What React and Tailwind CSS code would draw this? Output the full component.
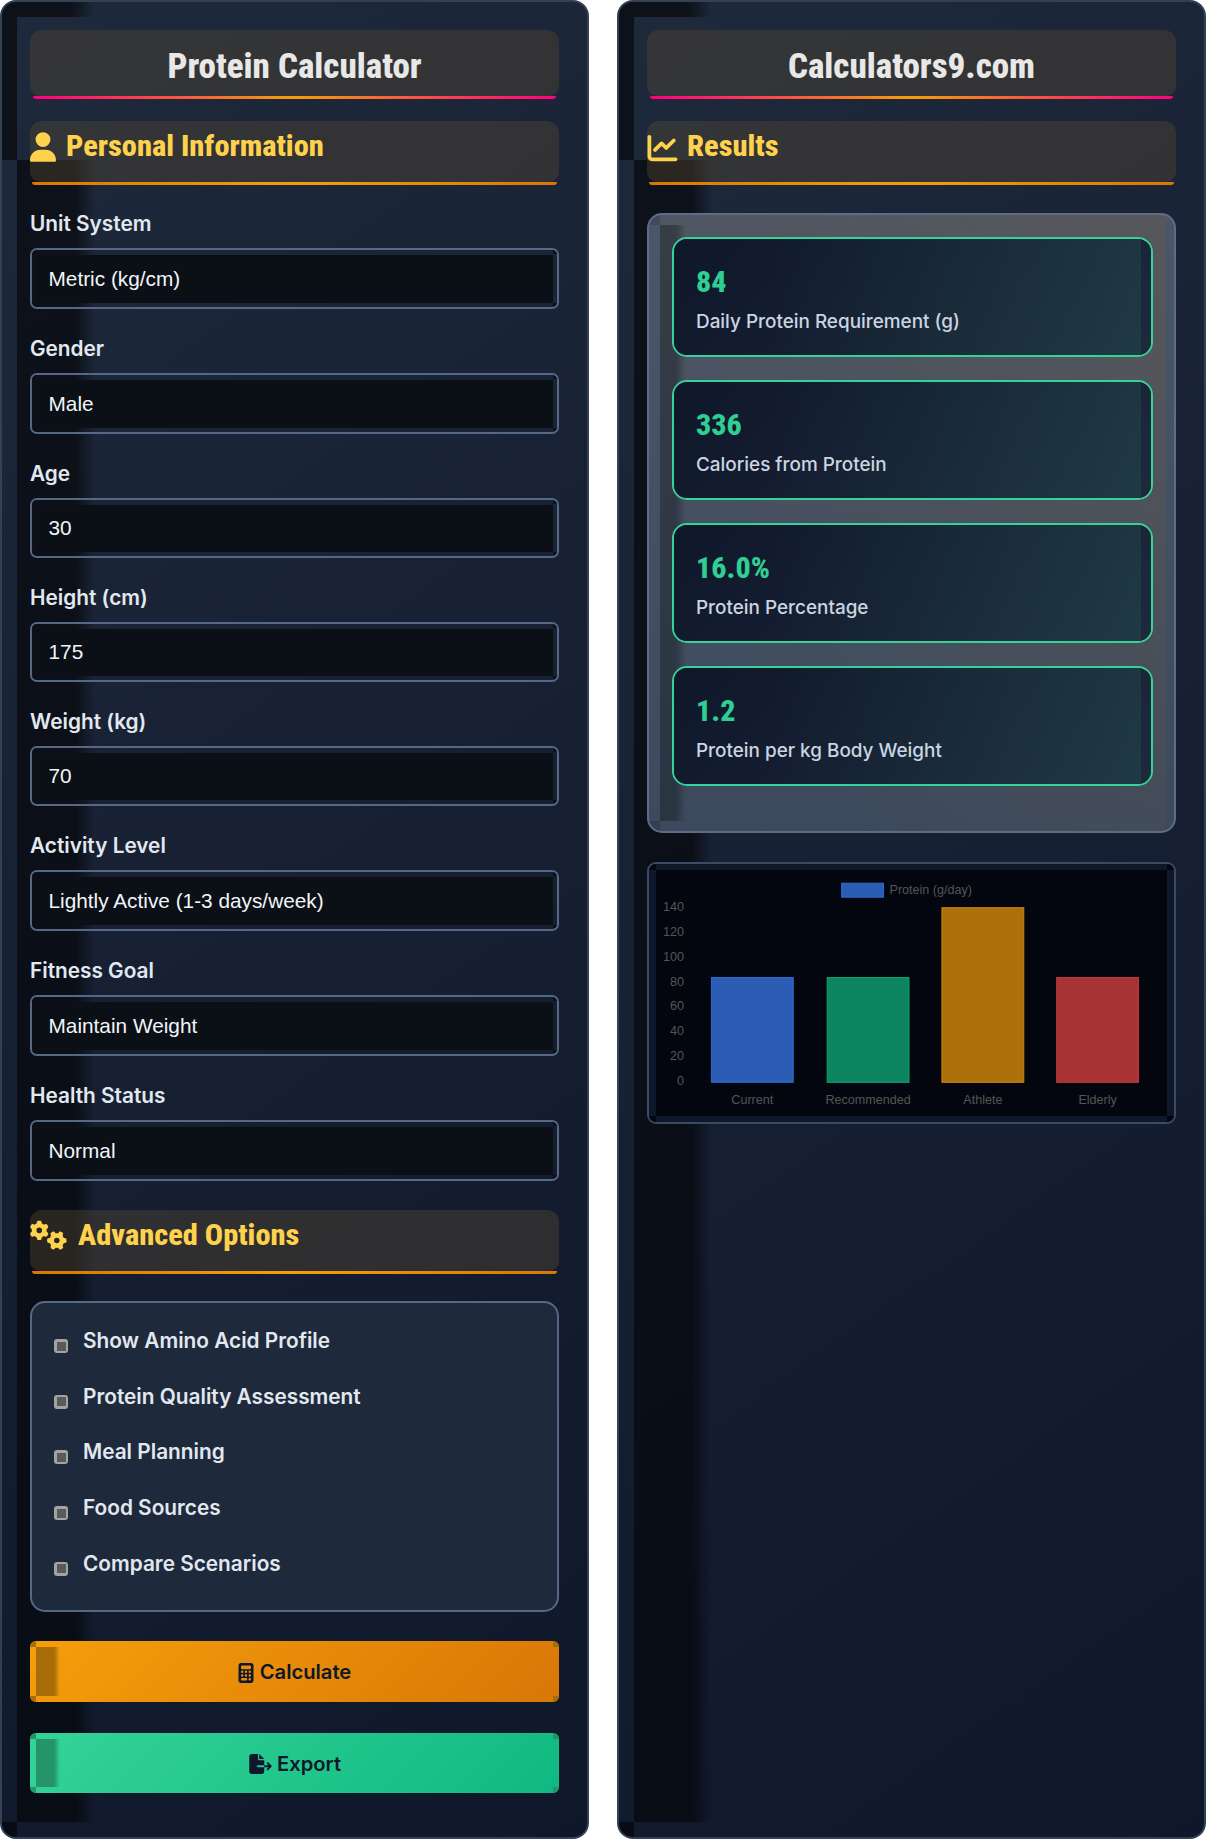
import { FaUser, FaChartLine, FaGears, FaCalculator, FaFileExport } from 'react-icons/fa6';

const condensed = "font-['Roboto_Condensed','Liberation_Sans_Narrow',Roboto,sans-serif]";

// dark leftovers in the corners of a box
function Corners({ size, color }) {
  const box = `absolute ${size} ${color}`;
  return (
    <>
      <span className={`${box} left-0 top-0`} />
      <span className={`${box} right-0 top-0`} />
      <span className={`${box} left-0 bottom-0`} />
      <span className={`${box} right-0 bottom-0`} />
    </>
  );
}

function Panel({ children }) {
  return (
    <section className="relative h-[1839px] w-[589px] overflow-hidden rounded-[16px] border-2 border-[#334155] bg-[linear-gradient(145deg,#1e293b,#0f172a)] px-[28px] pt-[28px]">
      <div className="pointer-events-none absolute left-[-2px] top-[-2px] h-[160px] w-[17px] bg-black/55" />
      <div className="pointer-events-none absolute left-[15px] top-[-2px] h-[17px] w-[78px] bg-linear-to-r from-black/55 from-70% to-transparent" />
      <div className="pointer-events-none absolute left-[15px] top-[158px] bottom-[15px] w-[78px] bg-linear-to-r from-black/55 from-75% to-transparent" />
      <div className="pointer-events-none absolute bottom-[-2px] left-[-2px] h-[17px] w-[17px] bg-black/55" />
      <div className="relative flex flex-col">{children}</div>
    </section>
  );
}

function Title({ children }) {
  return (
    <div className="relative mb-[25px]">
      <div className="flex h-[66px] items-center justify-center rounded-t-[12px] rounded-b-[10px] bg-[rgba(87,72,50,0.4)] pt-[7px]">
        <h1 className={`${condensed} text-[35px] font-extrabold leading-none text-[#e8e8e6]`}>{children}</h1>
      </div>
      <div className="absolute left-[3px] right-[3px] top-full h-[3px] rounded-b-[3px] bg-[linear-gradient(90deg,#ff0080,#f59e0b,#ff0080)]" />
    </div>
  );
}

function Section({ icon, gap, children, className }) {
  return (
    <div className={`relative ${className}`}>
      <div className="flex h-[61px] items-start rounded-t-[12px] rounded-b-[10px] bg-[rgba(87,72,50,0.4)] pt-[9px] text-[#ffd24d]">
        {icon}
        <h2 className={`${condensed} ${gap} whitespace-nowrap text-[30.4px] font-extrabold leading-[32px]`}>{children}</h2>
      </div>
      <div className="absolute left-[2px] right-[2px] top-full h-[3px] rounded-b-[3px] bg-[linear-gradient(90deg,#d97706,#f59e0b,#d97706)]" />
    </div>
  );
}

function Field({ label, tall, children }) {
  return (
    <div className="mb-[24px]">
      <label className="mb-[10px] block h-[30px] pt-px font-['Inter',sans-serif] text-[20.8px] font-semibold leading-[30px] text-[#e2e8f0]">{label}</label>
      <div className={`relative overflow-hidden rounded-[7px] border-2 border-[#566884] p-[4.5px] ${tall ? 'h-[61px]' : 'h-[60px]'}`}>
        <Corners size="h-[4px] w-[4px]" color="bg-[#0b0f16]" />
        <div className="h-full bg-[#0b0f16]">{children}</div>
      </div>
    </div>
  );
}

const controlClass = "h-full w-full appearance-none bg-transparent pl-[12px] font-['Liberation_Sans',sans-serif] text-[20.8px] text-[#f1f5f9] outline-none";

function SelectField({ label, value }) {
  return (
    <Field label={label} tall>
      <select defaultValue={value} className={controlClass}>
        <option value={value}>{value}</option>
      </select>
    </Field>
  );
}

function NumberField({ label, value }) {
  return (
    <Field label={label}>
      <input type="number" readOnly value={value} className={controlClass} />
    </Field>
  );
}

function Option({ children }) {
  return (
    <div className="flex h-[55.7px] items-start gap-[15px]">
      <span className="mt-[14px] flex h-[14px] w-[14px] items-center justify-center rounded-[3px] bg-[#a3a3a3]">
        <span className="h-[9px] w-[9px] bg-[#5a5a5a]" />
      </span>
      <span className="font-['Inter',sans-serif] text-[20.8px] font-semibold leading-[32px] text-[#e2e8f0]">{children}</span>
    </div>
  );
}

function ActionButton({ icon, colors, strip, corner, gap, className, children }) {
  return (
    <button className={`relative flex w-full items-center justify-center overflow-hidden rounded-[6px] pt-[2px] font-['Inter',sans-serif] text-[20.2px] font-semibold text-[#0f172a] ${gap} ${colors} ${className}`}>
      <Corners size="h-[6px] w-[6px]" color={corner} />
      <span className={`absolute bottom-[6px] left-[6px] top-[6px] w-[24px] bg-linear-to-r from-75% to-transparent ${strip}`} />
      {icon}
      <span className="relative">{children}</span>
    </button>
  );
}

function ResultCard({ value, label }) {
  return (
    <div className="relative mb-[23px] h-[120px] overflow-hidden rounded-[15px] border-2 border-[#34d399] bg-[#101a2e] pl-[22px] pt-[25px]">
      <div className="absolute bottom-0 left-0 right-0 top-0 bg-[linear-gradient(135deg,#0f172a,#1e293b)]" />
      <div className="absolute bottom-0 left-0 right-[10px] top-0 bg-linear-to-r from-transparent from-20% to-[#34d399]/10" />
      <div className={`${condensed} relative h-[36px] text-[30px] font-extrabold leading-[36px] text-[#2fcf93]`}>{value}</div>
      <div className="relative mt-[8px] font-['Inter',sans-serif] text-[18.9px] font-medium leading-[28px] text-[#cbd5e1]">{label}</div>
    </div>
  );
}

const bars = [
  { name: 'Current', x: 55, fill: '#2b5db5', stroke: '#2f69cf', top: 107 },
  { name: 'Recommended', x: 171, fill: '#0c8560', stroke: '#10a372', top: 107 },
  { name: 'Athlete', x: 286, fill: '#ac710a', stroke: '#c9860c', top: 37 },
  { name: 'Elderly', x: 401, fill: '#a83335', stroke: '#c53a3a', top: 107 },
];

function Chart() {
  return (
    <div className="relative mt-[5px] h-[262px] overflow-hidden rounded-[9px] border-2 border-[#3c4b63] bg-[#0f172a] px-[7px] py-[6px]">
      <Corners size="h-[6px] w-[7px]" color="bg-[#04060f]" />
      <svg viewBox="0 0 512 246" className="block h-[246px] w-[511px] bg-[#04060f]" fontFamily="Liberation Sans, sans-serif" fontSize="12.6" fill="#555">
        <rect x="186" y="13" width="42" height="14" fill="#2b5db5" stroke="#2f69cf" />
        <text x="234" y="24">Protein (g/day)</text>
        {[140, 120, 100, 80, 60, 40, 20, 0].map((v, i) => (
          <text key={v} x="28" y={40.5 + i * 25} textAnchor="end">{v}</text>
        ))}
        {bars.map((b) => (
          <g key={b.name}>
            <rect x={b.x + 0.5} y={b.top + 0.5} width="82" height={212 - b.top} fill={b.fill} stroke={b.stroke} />
            <text x={b.x + 41.5} y="234.5" textAnchor="middle">{b.name}</text>
          </g>
        ))}
      </svg>
    </div>
  );
}

export default function App() {
  return (
    <div className="flex h-[1839px] w-[1206px] justify-between overflow-hidden bg-white">
      <Panel>
        <Title>Protein Calculator</Title>
        <Section className="mb-[26px]" gap="ml-[10px]" icon={<FaUser className="mt-[2px] h-[30px] w-[26px] shrink-0" />}>Personal Information</Section>

        <SelectField label="Unit System" value="Metric (kg/cm)" />
        <SelectField label="Gender" value="Male" />
        <NumberField label="Age" value="30" />
        <NumberField label="Height (cm)" value="175" />
        <NumberField label="Weight (kg)" value="70" />
        <SelectField label="Activity Level" value="Lightly Active (1-3 days/week)" />
        <SelectField label="Fitness Goal" value="Maintain Weight" />
        <SelectField label="Health Status" value="Normal" />

        <Section className="mb-[30px] mt-[5px]" gap="ml-[11px]" icon={<FaGears className="mt-[1px] h-[30px] w-[37px] shrink-0" />}>Advanced Options</Section>

        <div className="mb-[29px] h-[311px] rounded-[15px] border-2 border-[#566884] bg-[#1e293b] pl-[22px] pt-[22px]">
          <Option>Show Amino Acid Profile</Option>
          <Option>Protein Quality Assessment</Option>
          <Option>Meal Planning</Option>
          <Option>Food Sources</Option>
          <Option>Compare Scenarios</Option>
        </div>

        <ActionButton
          className="mb-[31px] h-[61px]"
          gap="gap-[6px]"
          colors="bg-[linear-gradient(135deg,#f59e0b,#d97706)]"
          strip="from-[#a86d08]"
          corner="bg-[#a86d08]"
          icon={<FaCalculator className="relative h-[20px] w-[16px]" />}
        >
          Calculate
        </ActionButton>
        <ActionButton
          className="h-[60px]"
          gap="gap-[4px]"
          colors="bg-[linear-gradient(135deg,#34d399,#10b981)]"
          strip="from-[#259468]"
          corner="bg-[#259468]"
          icon={<FaFileExport className="relative h-[20px] w-[25px]" />}
        >
          Export
        </ActionButton>
      </Panel>

      <Panel>
        <Title>Calculators9.com</Title>
        <Section className="mb-[31px]" gap="ml-[9px]" icon={<FaChartLine className="mt-[3px] h-[30px] w-[31px] shrink-0" />}>Results</Section>

        <div className="relative mb-[24px] h-[620px] overflow-hidden rounded-[15px] border-2 border-[#5d6d88] bg-linear-to-b from-[#4a5669] to-[#3d4a5d] pl-[23px] pr-[21px] pt-[22px]">
          <div className="absolute bottom-0 left-[11px] right-[8px] top-0 bg-[linear-gradient(to_bottom_left,rgba(120,90,50,0.28),transparent_80%)]" />
          <div className="absolute bottom-[10px] left-[11px] top-[10px] w-[26px] bg-linear-to-r from-black/30 from-60% to-transparent" />
          <span className="absolute left-0 top-0 h-[10px] w-[11px] bg-black/15" />
          <span className="absolute bottom-0 left-0 h-[10px] w-[11px] bg-black/15" />
          <div className="relative">
            <ResultCard value="84" label="Daily Protein Requirement (g)" />
            <ResultCard value="336" label="Calories from Protein" />
            <ResultCard value="16.0%" label="Protein Percentage" />
            <ResultCard value="1.2" label="Protein per kg Body Weight" />
          </div>
        </div>

        <Chart />
      </Panel>
    </div>
  );
}
